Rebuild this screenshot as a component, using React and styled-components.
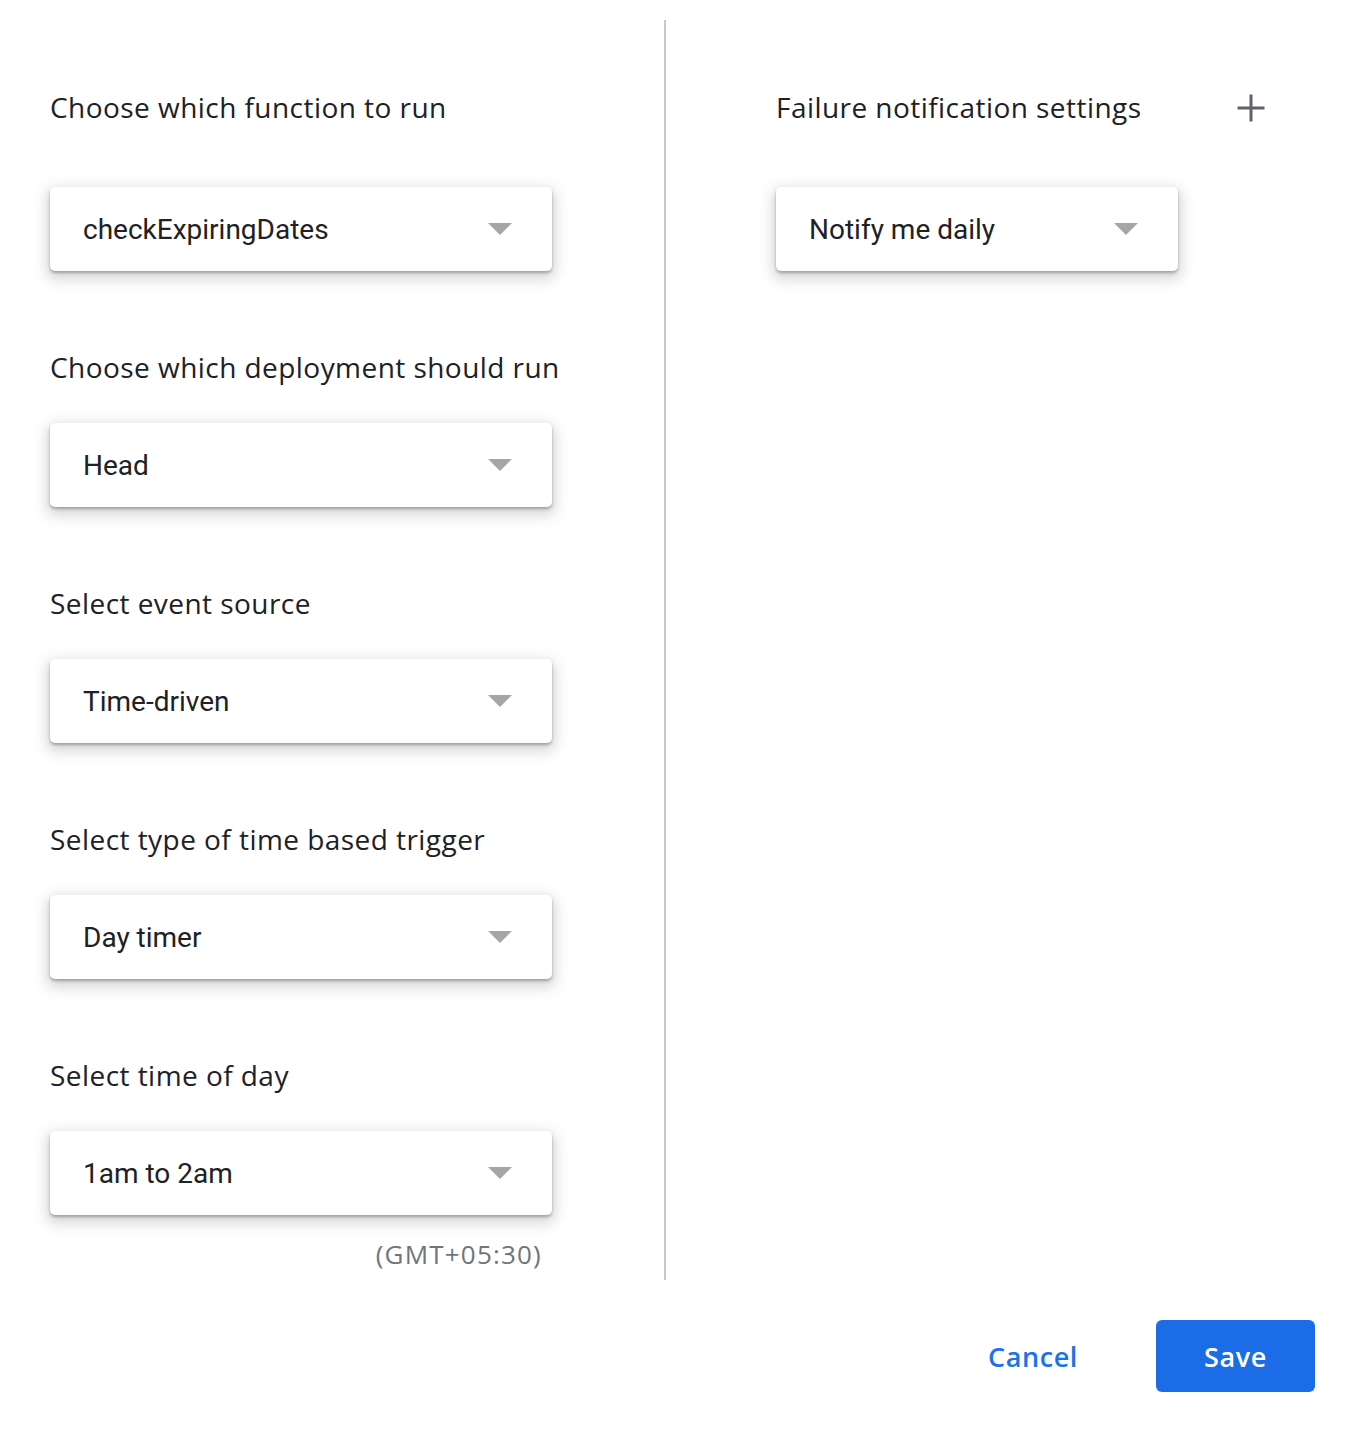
import React from "react";
import styled, { createGlobalStyle } from "styled-components";

const Global = createGlobalStyle`
  html, body { margin: 0; padding: 0; background: #fff; }
  body { font-family: Roboto, "Liberation Sans", sans-serif; }
`;

const Page = styled.div`
  width: 1350px;
  padding-top: 20px;
  box-sizing: border-box;
`;

const Columns = styled.div`
  display: flex;
  align-items: stretch;
`;

const LeftColumn = styled.div`
  width: 664px;
  box-sizing: border-box;
  padding: 67px 0 0 50px;
  height: 1260px;
`;

const Divider = styled.div`
  width: 2px;
  background: #c6c8cc;
`;

const RightColumn = styled.div`
  flex: 1;
  padding: 67px 0 0 110px;
`;

const Section = styled.div`
  display: flex;
  flex-direction: column;
  margin-bottom: ${(p) => (p.$last ? 0 : 76)}px;
`;

const HeadingRow = styled.div`
  display: flex;
  align-items: flex-start;
  justify-content: space-between;
  width: 490px;
`;

const Heading = styled.div`
  font-family: "Open Sans", "Liberation Sans", sans-serif;
  font-size: 28px;
  line-height: 40px;
  color: #202124;
  letter-spacing: 0.45px;
  margin-bottom: ${(p) => p.$gap}px;
  white-space: nowrap;
`;

const PlusButton = styled.button`
  border: 0;
  background: none;
  padding: 0;
  width: 30px;
  height: 30px;
  margin-top: 6px;
  display: flex;
  align-items: center;
  justify-content: center;
  cursor: pointer;
`;

const Select = styled.div`
  width: ${(p) => p.$width}px;
  height: 84px;
  box-sizing: border-box;
  background: #fff;
  border-radius: 5px;
  box-shadow: 0 2px 3px rgba(60, 64, 67, 0.38), 0 5px 14px 3px rgba(60, 64, 67, 0.22);
  display: flex;
  align-items: center;
  justify-content: space-between;
  padding: 0 40px 0 33px;
`;

const SelectValue = styled.span`
  font-family: Roboto, "Liberation Sans", sans-serif;
  font-size: 28px;
  color: #202124;
`;

const Caret = styled.span`
  width: 0;
  height: 0;
  border-left: 12px solid transparent;
  border-right: 12px solid transparent;
  border-top: 12px solid #a6a6a6;
`;

const Hint = styled.div`
  width: 492px;
  text-align: right;
  font-family: "Open Sans", "Liberation Sans", sans-serif;
  font-size: 26px;
  line-height: 32px;
  letter-spacing: 1.2px;
  color: #70757a;
  margin-top: 23px;
`;

const Footer = styled.div`
  display: flex;
  justify-content: flex-end;
  align-items: center;
  gap: 58px;
  padding: 40px 35px 0 0;
`;

const TextButton = styled.button`
  border: 0;
  background: none;
  font-family: "Open Sans", "Liberation Sans", sans-serif;
  font-weight: 600;
  font-size: 27px;
  letter-spacing: 0.6px;
  color: #1a73e8;
  padding: 0 20px;
  height: 72px;
  cursor: pointer;
`;

const PrimaryButton = styled.button`
  border: 0;
  width: 159px;
  height: 72px;
  border-radius: 6px;
  background: #1b6ce6;
  color: #fff;
  font-family: "Open Sans", "Liberation Sans", sans-serif;
  font-weight: 600;
  font-size: 27px;
  letter-spacing: 0.6px;
  cursor: pointer;
`;

const fields = [
  { label: "Choose which function to run", value: "checkExpiringDates", gap: 60 },
  { label: "Choose which deployment should run", value: "Head", gap: 36 },
  { label: "Select event source", value: "Time-driven", gap: 36 },
  { label: "Select type of time based trigger", value: "Day timer", gap: 36 },
  { label: "Select time of day", value: "1am to 2am", gap: 36 },
];

function Dropdown({ value, width }) {
  return (
    <Select $width={width}>
      <SelectValue>{value}</SelectValue>
      <Caret />
    </Select>
  );
}

export default function App() {
  return (
    <Page>
      <Global />
      <Columns>
        <LeftColumn>
          {fields.map((f, i) => (
            <Section key={f.label} $last={i === fields.length - 1}>
              <Heading $gap={f.gap}>{f.label}</Heading>
              <Dropdown value={f.value} width={502} />
            </Section>
          ))}
          <Hint>(GMT+05:30)</Hint>
        </LeftColumn>
        <Divider />
        <RightColumn>
          <HeadingRow>
            <Heading $gap={60}>Failure notification settings</Heading>
            <PlusButton aria-label="Add notification">
              <svg width="30" height="30" viewBox="0 0 30 30">
                <path d="M15 1.5v27M1.5 15h27" stroke="#5f6368" strokeWidth="3" />
              </svg>
            </PlusButton>
          </HeadingRow>
          <Dropdown value="Notify me daily" width={402} />
        </RightColumn>
      </Columns>
      <Footer>
        <TextButton>Cancel</TextButton>
        <PrimaryButton>Save</PrimaryButton>
      </Footer>
    </Page>
  );
}
